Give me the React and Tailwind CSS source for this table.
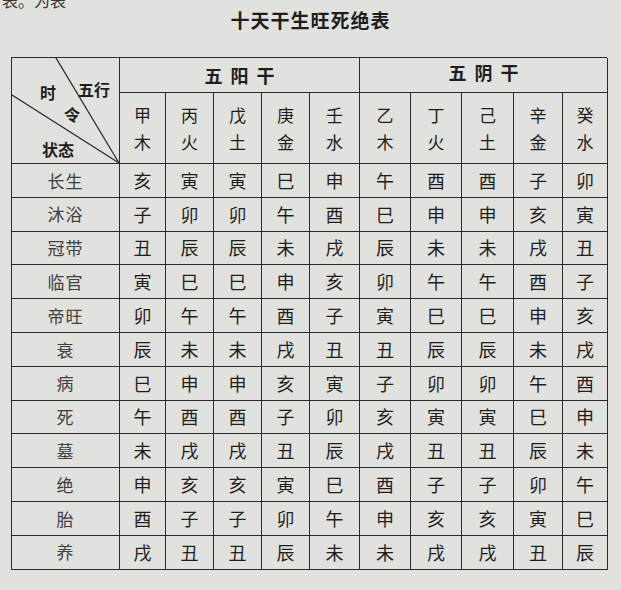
import React from "react";

const stems = [
  ["甲", "木"], ["丙", "火"], ["戊", "土"], ["庚", "金"], ["壬", "水"],
  ["乙", "木"], ["丁", "火"], ["己", "土"], ["辛", "金"], ["癸", "水"],
];

const rows = [
  ["长生", "亥寅寅巳申午酉酉子卯"],
  ["沐浴", "子卯卯午酉巳申申亥寅"],
  ["冠带", "丑辰辰未戌辰未未戌丑"],
  ["临官", "寅巳巳申亥卯午午酉子"],
  ["帝旺", "卯午午酉子寅巳巳申亥"],
  ["衰", "辰未未戌丑丑辰辰未戌"],
  ["病", "巳申申亥寅子卯卯午酉"],
  ["死", "午酉酉子卯亥寅寅巳申"],
  ["墓", "未戌戌丑辰戌丑丑辰未"],
  ["绝", "申亥亥寅巳酉子子卯午"],
  ["胎", "酉子子卯午申亥亥寅巳"],
  ["养", "戌丑丑辰未未戌戌丑辰"],
];

const cell = "border-r-[1.5px] border-b-[1.5px] border-[#2b2b2b] flex items-center justify-center";

export default function App() {
  return (
    <div
      className="w-[621px] h-[590px] overflow-hidden bg-[#e1e1de] text-[#1e1e1e]"
      style={{ fontFamily: '"Noto Sans CJK SC", "Noto Sans", sans-serif' }}
    >
      <div className="h-[9px] overflow-hidden">
        <div className="-mt-[10px] pl-[2px] text-[16px] leading-[20px] text-[#333]">表。为表</div>
      </div>
      <h1 className="text-center text-[19px] leading-[22px] font-bold tracking-[1px]">十天干生旺死绝表</h1>

      <div
        className="ml-[11px] mt-[26px] grid w-[596px] border-l-[1.5px] border-t-[1.5px] border-[#2b2b2b]"
        style={{ gridTemplateColumns: "108px 46px 48px 48px 48px 50px 51px 51px 52px 49px 45px" }}
      >
        {/* corner cell */}
        <div className={`${cell} row-span-2 relative h-[106px] block`}>
          <svg className="absolute inset-0" width="108" height="106" viewBox="0 0 108 106">
            <line x1="44" y1="0" x2="107" y2="105" stroke="#2b2b2b" strokeWidth="1.3" />
            <line x1="0" y1="37" x2="107" y2="105" stroke="#2b2b2b" strokeWidth="1.3" />
          </svg>
          <span className="absolute left-[28px] top-[26px] text-[16px] font-bold leading-none">时</span>
          <span className="absolute left-[66px] top-[23px] text-[16px] font-bold leading-none">五行</span>
          <span className="absolute left-[52px] top-[48px] text-[16px] font-bold leading-none">令</span>
          <span className="absolute left-[30px] top-[83px] text-[16px] font-bold leading-none">状态</span>
        </div>
        <div className={`${cell} col-span-5 h-[35px] text-[18px] font-bold tracking-[8px] pl-[8px]`}>五阳干</div>
        <div className={`${cell} col-span-5 h-[35px] text-[18px] font-bold tracking-[8px] pl-[8px] items-start pt-[1px]`}>五阴干</div>
        {stems.map(([a, b], i) => (
          <div key={i} className={`${cell} h-[71px] flex-col text-[17px] leading-[27px]`}>
            <span>{a}</span>
            <span>{b}</span>
          </div>
        ))}

        {rows.map(([label, vals]) => (
          <React.Fragment key={label}>
            <div className={`${cell} h-[33.8px] text-[17px] tracking-[1px] text-[#404040]`}>{label}</div>
            {vals.split("").map((v, j) => (
              <div key={j} className={`${cell} h-[33.8px] text-[18px]`}>{v}</div>
            ))}
          </React.Fragment>
        ))}
      </div>
    </div>
  );
}
